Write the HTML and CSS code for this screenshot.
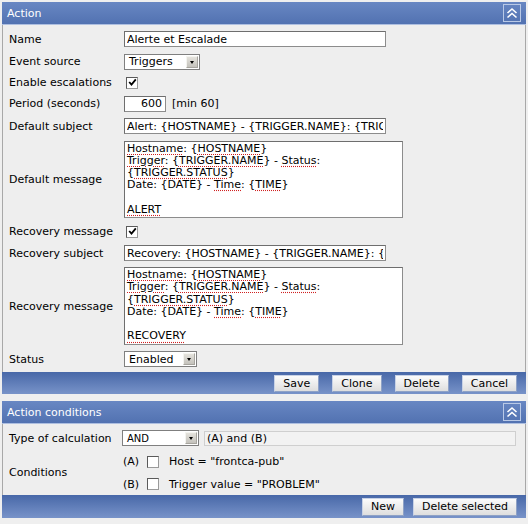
FILE: index.html
```html
<!DOCTYPE html>
<html>
<head>
<meta charset="utf-8">
<title>Action</title>
<link rel="stylesheet" href="styles.css">
</head>
<body>
<div class="panel">
  <div class="phead">
    <span class="ptitle">Action</span>
    <svg class="collapse" width="18" height="18" viewBox="0 0 18 18"><rect x="0.5" y="0.5" width="17" height="17" fill="none" stroke="#b9c9e6"/><polyline points="4.5,9 9,5 13.5,9" fill="none" stroke="#fff" stroke-width="1.6"/><polyline points="4.5,13.5 9,9.5 13.5,13.5" fill="none" stroke="#fff" stroke-width="1.6"/></svg>
  </div>
  <div class="pbody">
    <div class="row h22"><div class="lbl">Name</div><div class="val"><input class="txt wide" type="text" value="Alerte et Escalade"></div></div>
    <div class="row h23"><div class="lbl">Event source</div><div class="val"><div class="sel w76"><span class="seltext">Triggers</span><span class="arrow"></span></div></div></div>
    <div class="row h19"><div class="lbl">Enable escalations</div><div class="val"><span class="cb"><svg width="9" height="9" viewBox="0 0 9 9"><polyline points="1.2,4 3.5,6.6 7.8,1.4" fill="none" stroke="#000" stroke-width="1.8"/></svg></span></div></div>
    <div class="row h23"><div class="lbl">Period (seconds)</div><div class="val"><input class="txt num" type="text" value="600"><span class="hint">[min 60]</span></div></div>
    <div class="row h22"><div class="lbl">Default subject</div><div class="val"><input class="txt wide" type="text" value="Alert: {HOSTNAME} - {TRIGGER.NAME}: {TRIGGER.STATUS}"></div></div>
    <div class="row h84"><div class="lbl">Default message</div><div class="val"><div class="area h77"><span class="sp">Hostname</span>: {<span class="sp">HOSTNAME</span>}<br><span class="sp">Trigger</span>: {<span class="sp">TRIGGER.NAME</span>} - <span class="sp">Status</span>:<br>{<span class="sp">TRIGGER.STATUS</span>}<br>Date: {DATE} - <span class="sp">Time</span>: {<span class="sp">TIME</span>}<br><br><span class="sp">ALERT</span></div></div></div>
    <div class="row h21"><div class="lbl">Recovery message</div><div class="val"><span class="cb"><svg width="9" height="9" viewBox="0 0 9 9"><polyline points="1.2,4 3.5,6.6 7.8,1.4" fill="none" stroke="#000" stroke-width="1.8"/></svg></span></div></div>
    <div class="row h22"><div class="lbl">Recovery subject</div><div class="val"><input class="txt wide" type="text" value="Recovery: {HOSTNAME} - {TRIGGER.NAME}: {STATUS}"></div></div>
    <div class="row h84"><div class="lbl">Recovery message</div><div class="val"><div class="area h78"><span class="sp">Hostname</span>: {<span class="sp">HOSTNAME</span>}<br><span class="sp">Trigger</span>: {<span class="sp">TRIGGER.NAME</span>} - <span class="sp">Status</span>:<br>{<span class="sp">TRIGGER.STATUS</span>}<br>Date: {DATE} - <span class="sp">Time</span>: {<span class="sp">TIME</span>}<br><br><span class="sp">RECOVERY</span></div></div></div>
    <div class="row h22"><div class="lbl">Status</div><div class="val"><div class="sel w73"><span class="seltext">Enabled</span><span class="arrow"></span></div></div></div>
  </div>
  <div class="pfoot">
    <button class="btn">Save</button>
    <button class="btn">Clone</button>
    <button class="btn">Delete</button>
    <button class="btn">Cancel</button>
  </div>
</div>

<div class="panel second">
  <div class="phead">
    <span class="ptitle">Action conditions</span>
    <svg class="collapse" width="18" height="18" viewBox="0 0 18 18"><rect x="0.5" y="0.5" width="17" height="17" fill="none" stroke="#b9c9e6"/><polyline points="4.5,9 9,5 13.5,9" fill="none" stroke="#fff" stroke-width="1.6"/><polyline points="4.5,13.5 9,9.5 13.5,13.5" fill="none" stroke="#fff" stroke-width="1.6"/></svg>
  </div>
  <div class="pbody body2">
    <div class="row h24"><div class="lbl lbl2">Type of calculation</div><div class="val"><div class="sel w77"><span class="seltext small">AND</span><span class="arrow"></span></div><div class="formula">(A) and (B)</div></div></div>
    <div class="cond">
      <div class="lbl lbl2">Conditions</div>
      <div class="condlist">
        <div class="condrow r23"><span class="tag">(A)</span><span class="cb empty"></span><span class="ctext">Host = "frontca-pub"</span></div>
        <div class="condrow r22"><span class="tag">(B)</span><span class="cb empty"></span><span class="ctext">Trigger value = "PROBLEM"</span></div>
      </div>
    </div>
  </div>
  <div class="pfoot foot2">
    <button class="btn">New</button>
    <button class="btn">Delete selected</button>
  </div>
</div>
</body>
</html>
```
FILE: styles.css
```css
html, body {
  margin: 0;
  padding: 0;
}
body {
  background: #efefef;
  padding: 2px 2px 0 2px;
  font-family: "DejaVu Sans", Verdana, sans-serif;
  font-size: 11px;
  color: #000;
}
.panel {
  width: 524px;
  display: flex;
  flex-direction: column;
}
.panel.second {
  margin-top: 7px;
}
.phead {
  height: 22px;
  border-bottom: 1px solid #aebfe0;
  background: linear-gradient(#6887c3, #5272b1);
  display: flex;
  align-items: center;
  justify-content: space-between;
  padding: 0 5px 0 5px;
}
.ptitle {
  color: #fff;
  font-size: 11px;
}
.collapse {
  display: block;
}
.pbody {
  background: #eeeeee;
  border-left: 1px solid #a8a8a8;
  border-right: 1px solid #a8a8a8;
  padding: 3px 0 2px 6px;
}
.body2 {
  padding: 2px 0 0 6px;
}
.row {
  display: flex;
  align-items: center;
}
.h19 { height: 19px; }
.h21 { height: 21px; }
.h22 { height: 22px; }
.h23 { height: 23px; }
.h24 { height: 24px; }
.h84 { height: 84px; }
.lbl {
  width: 115px;
  flex: none;
  white-space: nowrap;
}
.lbl2 {
  width: 113px;
}
.val {
  display: flex;
  align-items: center;
}
.txt {
  box-sizing: border-box;
  height: 16px;
  border: 1px solid #8c8c8c;
  border-top-color: #6e6e6e;
  border-left-color: #6e6e6e;
  background: #fff;
  font-family: "DejaVu Sans", Verdana, sans-serif;
  font-size: 11px;
  padding: 0 2px;
  margin: 0;
  color: #000;
  outline: none;
}
.wide { width: 262px; }
.num {
  width: 42px;
  text-align: right;
  padding-right: 3px;
}
.hint {
  margin-left: 6px;
}
.sel {
  box-sizing: border-box;
  height: 16px;
  border: 1px solid #7f7f7f;
  background: #fff;
  display: flex;
  align-items: center;
  justify-content: space-between;
  padding: 0 1px 0 4px;
}
.w76 { width: 76px; }
.w73 { width: 73px; }
.w77 { width: 77px; }
.seltext.small {
  font-size: 10px;
}
.arrow {
  width: 12px;
  height: 12px;
  box-sizing: border-box;
  background: linear-gradient(#e4e2dc, #c4c2bc);
  border: 1px solid #a6a49e;
  border-top-color: #f4f4f0;
  border-left-color: #f4f4f0;
  position: relative;
}
.arrow::after {
  content: "";
  position: absolute;
  left: 3px;
  top: 4px;
  border-left: 2.5px solid transparent;
  border-right: 2.5px solid transparent;
  border-top: 3px solid #000;
}
.cb {
  box-sizing: border-box;
  width: 12px;
  height: 12px;
  margin-left: 2px;
  background: #fff;
  border: 1px solid #5a5a5a;
  border-bottom-color: #9a9a9a;
  border-right-color: #9a9a9a;
  display: flex;
  align-items: center;
  justify-content: center;
}
.cb svg {
  display: block;
}
.area {
  box-sizing: border-box;
  width: 279px;
  background: #fff;
  border: 1px solid #8c8c8c;
  border-top-color: #6e6e6e;
  border-left-color: #6e6e6e;
  padding: 1px 2px;
  font-size: 11px;
  line-height: 12.3px;
  white-space: nowrap;
  overflow: hidden;
}
.h77 { height: 77px; }
.h78 { height: 78px; }
.sp {
  text-decoration: underline dotted #d02020;
  text-underline-offset: 2px;
}
.formula {
  box-sizing: border-box;
  margin-left: 5px;
  width: 312px;
  height: 15px;
  background: #f2f2f2;
  border: 1px solid #cfcfcf;
  padding: 0 2px;
  line-height: 13px;
}
.cond {
  display: flex;
  align-items: center;
}
.condlist {
  display: flex;
  flex-direction: column;
}
.condrow {
  display: flex;
  align-items: center;
}
.r23 { height: 23px; }
.r22 { height: 22px; }
.tag {
  margin-left: 1px;
  width: 24px;
}
.cb.empty {
  margin-left: 0;
  width: 12px;
  height: 12px;
}
.ctext {
  margin-left: 10px;
}
.pfoot {
  height: 22px;
  background: linear-gradient(#4868a8, #7893c9);
  display: flex;
  align-items: center;
  justify-content: flex-end;
  gap: 13px;
  padding: 0 9px 0 0;
}
.foot2 {
  height: 23px;
  gap: 9px;
}
.btn {
  box-sizing: border-box;
  height: 17px;
  padding: 0 8px;
  margin: 0;
  border: 1px solid #8fa2c6;
  border-top-color: #c8d2e6;
  border-left-color: #c8d2e6;
  background: linear-gradient(#fbfbfb, #dedede);
  font-family: "DejaVu Sans", Verdana, sans-serif;
  font-size: 11px;
  color: #000;
  line-height: 15px;
}
.foot2 .btn {
  height: 18px;
}
```
